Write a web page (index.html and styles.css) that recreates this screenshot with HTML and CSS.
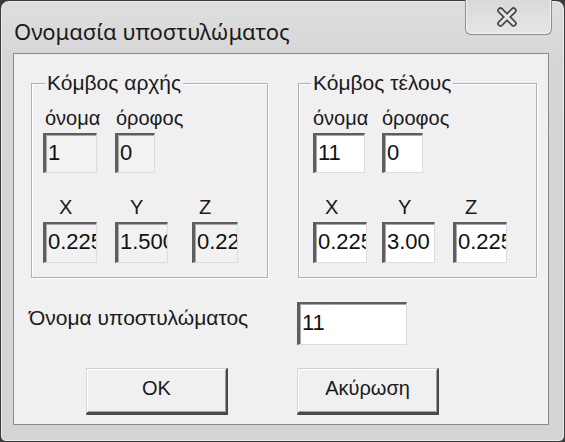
FILE: index.html
```
<!DOCTYPE html>
<html lang="el">
<head>
<meta charset="utf-8">
<link rel="stylesheet" href="styles.css">
</head>
<body>
<div class="window">
  <div class="titlebar">
    <span class="title">Ονομασία υποστυλώματος</span>
    <div class="close">
      <svg width="26" height="22" viewBox="0 0 26 22">
        <path d="M6.5 4.5 L19.5 17.5 M19.5 4.5 L6.5 17.5" stroke="#4a4a4a" stroke-width="6.5" stroke-linecap="round" fill="none"/>
        <path d="M6.5 4.5 L19.5 17.5 M19.5 4.5 L6.5 17.5" stroke="#e6e6e6" stroke-width="3" stroke-linecap="round" fill="none"/>
      </svg>
    </div>
  </div>
  <div class="client">
    <div class="groups">
      <fieldset class="group group-start">
        <legend>Κόμβος αρχής</legend>
        <div class="inner">
          <div class="lrow"><span class="l-name">όνομα</span><span>όροφος</span></div>
          <div class="frow">
            <div class="edit ro s-n1">1</div>
            <div class="edit ro s-f1">0</div>
          </div>
          <div class="lrow xyz"><span class="x1">X</span><span class="y1">Y</span><span class="z1">Z</span></div>
          <div class="frow">
            <div class="edit ro c1a">0.225</div>
            <div class="edit ro c1b">1.500</div>
            <div class="edit ro c1c">0.225</div>
          </div>
        </div>
      </fieldset>
      <fieldset class="group group-end">
        <legend>Κόμβος τέλους</legend>
        <div class="inner">
          <div class="lrow"><span class="l-name2">όνομα</span><span>όροφος</span></div>
          <div class="frow">
            <div class="edit s-n2">11</div>
            <div class="edit s-f2">0</div>
          </div>
          <div class="lrow xyz"><span class="x2">X</span><span class="y2">Y</span><span class="z2">Z</span></div>
          <div class="frow">
            <div class="edit c2a">0.225</div>
            <div class="edit c2b">3.00</div>
            <div class="edit c2c">0.225</div>
          </div>
        </div>
      </fieldset>
    </div>
    <div class="name-row">
      <span class="name-label">Όνομα υποστυλώματος</span>
      <div class="edit name-edit">11</div>
    </div>
    <div class="buttons">
      <button class="btn">OK</button>
      <button class="btn">Ακύρωση</button>
    </div>
  </div>
</div>
</body>
</html>
```
FILE: styles.css
```
html, body {
  margin: 0;
  padding: 0;
  background: #3a3a3a;
}
body {
  width: 565px;
  height: 442px;
  overflow: hidden;
}
.window {
  box-sizing: border-box;
  width: 565px;
  height: 442px;
  border: 1px solid #3c3c3c;
  border-radius: 9px 9px 6px 6px;
  background: linear-gradient(#dedede, #d6d6d6 60px, #d4d4d4);
  padding: 0 15px 16px 12px;
  display: flex;
  flex-direction: column;
  box-shadow: inset 0 0 0 1px #ececec;
}
.titlebar {
  height: 52px;
  display: flex;
  align-items: flex-start;
  flex: none;
}
.title {
  font-family: "Noto Sans", "Open Sans", sans-serif;
  font-size: 22px;
  line-height: 28px;
  color: #1a1a1a;
  padding-top: 16px;
  padding-left: 1px;
}
.close {
  margin-left: auto;
  margin-right: -3px;
  margin-top: -1px;
  width: 87px;
  height: 35px;
  box-sizing: border-box;
  border: 1px solid #8d8d8d;
  border-top: none;
  border-radius: 0 0 6px 6px;
  background: linear-gradient(#d9d9d9, #e6e6e6);
  box-shadow: inset 0 -1px 0 #f2f2f2, inset 1px 0 0 #f2f2f2, inset -1px 0 0 #f2f2f2;
  display: flex;
  align-items: center;
  justify-content: center;
  padding-bottom: 1px;
  padding-right: 4px;
}
.client {
  flex: 1;
  background: #f0f0f0;
  border: 1px solid #8a8a8a;
  display: flex;
  flex-direction: column;
  font-family: "Liberation Sans", Arial, sans-serif;
  font-size: 20px;
  color: #1a1a1a;
}
.groups {
  display: flex;
  gap: 30px;
  margin-top: 18px;
  padding-left: 17px;
}
.group {
  margin: 0;
  padding: 0;
  border: 1px solid #b0b0b0;
  box-shadow: inset 1px 1px 0 #fff, 1px 1px 0 #fff;
  box-sizing: border-box;
  height: 206px;
}
.group-start { width: 237px; }
.group-end { width: 239px; }
.group legend {
  padding: 0 2px;
  margin-left: 13px;
  line-height: 22px;
  font-size: 21px;
  background: #f0f0f0;
}
.group-end legend { margin-left: 12px; }
.inner {
  padding-top: 13px;
  padding-left: 11px;
}
.group-end .inner { padding-left: 14px; }
.lrow {
  display: flex;
  line-height: 22px;
  height: 22px;
}
.l-name { width: 71px; padding-left: 2px; }
.l-name2 { width: 69px; }
.xyz { margin-top: 23px; }
.x1 { width: 72px; padding-left: 16px; box-sizing: border-box; }
.y1 { width: 77px; padding-left: 15px; box-sizing: border-box; }
.z1 { padding-left: 7px; }
.x2 { width: 69px; padding-left: 12px; box-sizing: border-box; }
.y2 { width: 71px; padding-left: 16px; box-sizing: border-box; }
.z2 { padding-left: 12px; }
.frow {
  display: flex;
  margin-top: 4px;
}
.edit {
  box-sizing: border-box;
  height: 40px;
  background: #fff;
  border-top: 2px solid #5e5e5e;
  border-left: 3px solid #5e5e5e;
  border-right: 1px solid #dcdcdc;
  border-bottom: 1px solid #dcdcdc;
  box-shadow: inset 1px 1px 0 #a8a8a8;
  padding-left: 2px;
  line-height: 35px;
  overflow: hidden;
  white-space: nowrap;
  font-size: 22px;
  color: #111;
}
.edit.ro { background: #f2f2f2; }
.s-n1 { width: 54px; margin-right: 18px; }
.s-f1 { width: 40px; }
.c1a { width: 54px; margin-right: 18px; height: 41px; }
.c1b { width: 53px; margin-right: 24px; height: 41px; }
.c1c { width: 46px; height: 41px; }
.s-n2 { width: 52px; margin-right: 17px; }
.s-f2 { width: 41px; }
.c2a { width: 54px; margin-right: 15px; height: 41px; }
.c2b { width: 53px; margin-right: 18px; height: 41px; }
.c2c { width: 54px; height: 41px; }
.name-row {
  display: flex;
  align-items: flex-start;
  margin-top: 24px;
  padding-left: 15px;
}
.name-label {
  width: 268px;
  line-height: 22px;
  margin-top: 5px;
  font-size: 21px;
}
.name-edit {
  width: 110px;
  height: 43px;
  line-height: 38px;
}
.buttons {
  display: flex;
  gap: 69px;
  margin-top: 23px;
  padding-left: 72px;
}
.btn {
  width: 142px;
  height: 47px;
  box-sizing: border-box;
  margin: 0;
  padding: 0 0 4px 0;
  font-family: "Liberation Sans", Arial, sans-serif;
  font-size: 20px;
  color: #1a1a1a;
  background: #f0f0f0;
  border-top: 1px solid #cfcfcf;
  border-left: 1px solid #d8d8d8;
  border-right: 2px solid #4a4a4a;
  border-bottom: 3px solid #4a4a4a;
  box-shadow: inset 1px 1px 0 #fff, inset -1px -1px 0 #a0a0a0;
}
```
